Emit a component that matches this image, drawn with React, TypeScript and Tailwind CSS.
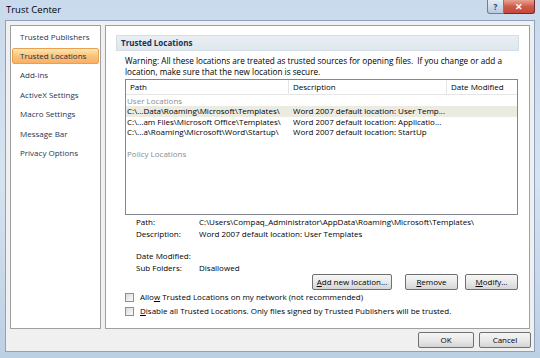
import React from "react";

const font = { fontFamily: '"Open Sans", "Noto Sans", Arial, sans-serif' };

function Btn({ children, w, className = "" }: { children: React.ReactNode; w: string; className?: string }) {
  return (
    <div
      className={`${w} h-[16px] flex items-center justify-center rounded-[2px] border border-[#707070] bg-gradient-to-b from-[#f6f6f6] via-[#e9e9e9] to-[#d5d5d5] text-[8px] text-black leading-none ${className}`}
    >
      {children}
    </div>
  );
}

function Check({ children }: { children: React.ReactNode }) {
  return (
    <div className="flex items-center h-[14px]">
      <div className="w-[9px] h-[9px] border border-[#8f8f8f] bg-gradient-to-br from-[#dcdcdc] to-[#fafafa] mr-[6px]" />
      <span className="text-[8px] text-black leading-none">{children}</span>
    </div>
  );
}

export default function App() {
  const nav = [
    "Trusted Publishers",
    "Trusted Locations",
    "Add-ins",
    "ActiveX Settings",
    "Macro Settings",
    "Message Bar",
    "Privacy Options",
  ];
  return (
    <div
      style={font}
      className="w-[540px] h-[358px] flex flex-col bg-gradient-to-b from-[#c9daec] via-[#d6e3f0] to-[#bcd0e4] overflow-hidden"
    >
      {/* Title bar */}
      <div className="h-[20px] flex items-start justify-between pl-[6px] pr-[5px]">
        <span className="text-[9.5px] text-black mt-[5px] leading-none">Trust Center</span>
        <div className="flex">
          <div className="w-[17px] h-[14px] rounded-bl-[3px] border border-[#6d7f95] border-t-0 bg-gradient-to-b from-[#e4ecf5] to-[#b9cadf] flex items-center justify-center text-[8px] font-bold text-[#2c3e55] leading-none">
            ?
          </div>
          <div className="w-[31px] h-[14px] rounded-br-[3px] border border-[#6e2c2c] border-t-0 border-l-0 bg-gradient-to-b from-[#e6a392] via-[#cf5a48] to-[#c24a3a] flex items-center justify-center text-[9px] font-bold text-white leading-none">
            ✕
          </div>
        </div>
      </div>

      {/* Client */}
      <div className="flex-1 mx-[5px] mb-[6px] border border-[#8ea3bb] bg-[#f0f0f0] flex flex-col">
        <div className="flex gap-[4px] px-[4px] pt-[4px] h-[308px]">
          {/* Left panel */}
          <div className="w-[91px] h-full bg-white border border-[#a0a0a0] pt-[1px] px-[1px]">
            {nav.map((n, i) =>
              i === 1 ? (
                <div
                  key={n}
                  className="h-[16px] my-[1.5px] flex items-center pl-[7px] rounded-[2px] border border-[#e5a352] bg-gradient-to-b from-[#fde5b4] via-[#fcc27a] to-[#fab065] text-[8px] text-[#1b2c44] leading-none"
                >
                  {n}
                </div>
              ) : (
                <div key={n} className="h-[19.5px] flex items-center pl-[8px] text-[8px] text-[#1f3554] leading-none">
                  {n}
                </div>
              )
            )}
          </div>

          {/* Right panel */}
          <div className="flex-1 h-full bg-white border border-[#a0a0a0] pt-[9px] px-[10px] flex flex-col">
            <div className="h-[16px] bg-gradient-to-b from-[#e9eff4] to-[#dfe7ee] border border-[#d4dee8] flex items-center pl-[4px] text-[8px] font-bold text-[#1b3050] leading-none">
              Trusted Locations
            </div>
            <div className="pl-[9px] pr-[1px] flex flex-col">
              <div className="mt-[4px] text-[8.2px] leading-[11px] text-black">
                Warning: All these locations are treated as trusted sources for opening files.&nbsp; If you change or add a
                <br />
                location, make sure that the new location is secure.
              </div>
              {/* Table */}
              <div className="mt-[2px] h-[136px] border border-[#828790] bg-white flex flex-col">
                <div className="h-[15px] flex items-center text-[8px] text-black leading-none border-b border-[#e5e5e5]">
                  <div className="w-[163px] pl-[4px] h-full flex items-center border-r border-[#e5e5e5]">Path</div>
                  <div className="w-[158px] pl-[4px] h-full flex items-center border-r border-[#e5e5e5]">Description</div>
                  <div className="flex-1 pl-[4px] h-full flex items-center">Date Modified</div>
                </div>
                <div className="h-[10px] mt-[1px] pl-[1px] flex items-center text-[8px] text-[#8c8c8c] leading-none">User Locations</div>
                <div className="h-[10.5px] flex items-center text-[8px] text-black leading-none bg-[#ecebe2]">
                  <div className="w-[163px] pl-[1px]">C:\...Data\Roaming\Microsoft\Templates\</div>
                  <div className="pl-[4px]">Word 2007 default location: User Temp...</div>
                </div>
                <div className="h-[10.5px] flex items-center text-[8px] text-black leading-none">
                  <div className="w-[163px] pl-[1px]">C:\...am Files\Microsoft Office\Templates\</div>
                  <div className="pl-[4px]">Word 2007 default location: Applicatio...</div>
                </div>
                <div className="h-[10.5px] flex items-center text-[8px] text-black leading-none">
                  <div className="w-[163px] pl-[1px]">C:\...a\Roaming\Microsoft\Word\Startup\</div>
                  <div className="pl-[4px]">Word 2007 default location: StartUp</div>
                </div>
                <div className="h-[10px] mt-[11px] pl-[1px] flex items-center text-[8px] text-[#8c8c8c] leading-none">Policy Locations</div>
              </div>

              {/* Details */}
              <div className="mt-[1px] pl-[11px] text-[8px] leading-[12px] text-black">
                <div className="flex">
                  <span className="w-[63px]">Path:</span>
                  <span>C:\Users\Compaq_Administrator\AppData\Roaming\Microsoft\Templates\</span>
                </div>
                <div className="flex">
                  <span className="w-[63px]">Description:</span>
                  <span>Word 2007 default location: User Templates</span>
                </div>
                <div className="flex mt-[10px]">
                  <span className="w-[63px]">Date Modified:</span>
                </div>
                <div className="flex">
                  <span className="w-[63px]">Sub Folders:</span>
                  <span>Disallowed</span>
                </div>
              </div>

              {/* Buttons */}
              <div className="flex justify-end gap-[7px] mt-[0px]">
                <Btn w="w-[80px]" className="mr-[6px]">
                  <span><span className="underline">A</span>dd new location...</span>
                </Btn>
                <Btn w="w-[53px]">
                  <span><span className="underline">R</span>emove</span>
                </Btn>
                <Btn w="w-[53px]">
                  <span><span className="underline">M</span>odify...</span>
                </Btn>
              </div>

              <div className="mt-[0px] flex flex-col">
                <Check>
                  Allo<span className="underline">w</span> Trusted Locations on my network (not recommended)
                </Check>
                <Check>
                  <span className="underline">D</span>isable all Trusted Locations. Only files signed by Trusted Publishers will be trusted.
                </Check>
              </div>
            </div>
          </div>
        </div>

        {/* Footer */}
        <div className="flex-1 flex items-center justify-end gap-[5px] pr-[3px]">
          <Btn w="w-[56px]" className="border-[#3c7fb1] from-[#eaf6fd] via-[#d9f0fc] to-[#a7d9f5]">
            OK
          </Btn>
          <Btn w="w-[52px]">Cancel</Btn>
        </div>
      </div>
    </div>
  );
}
